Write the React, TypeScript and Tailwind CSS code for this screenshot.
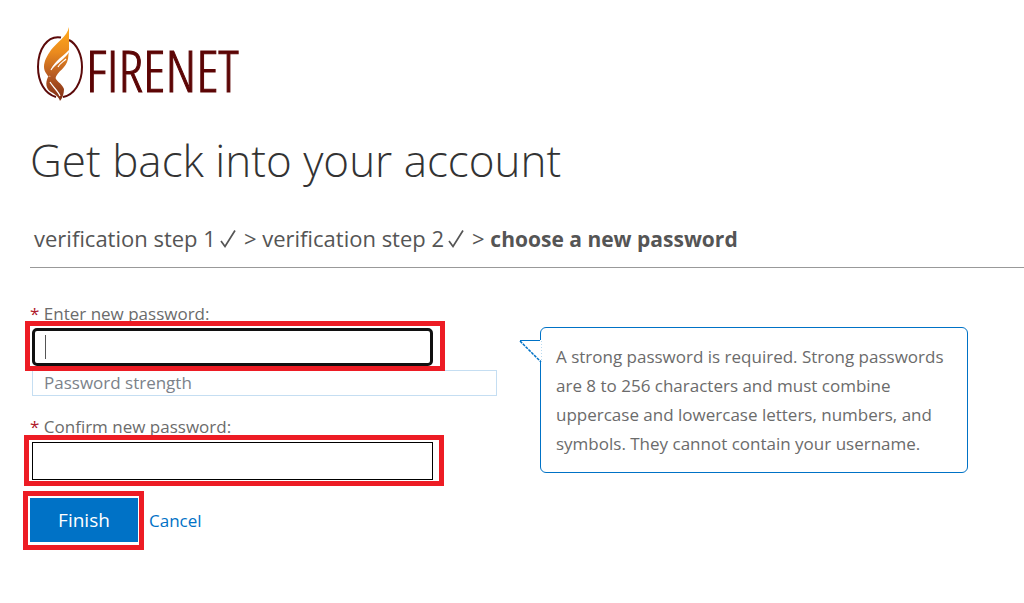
import type { ReactNode } from "react";

function Logo() {
  return (
    <div className="flex h-[76px] items-center" role="img" aria-label="FIRENET">
      <svg className="h-[76px] w-[50px] shrink-0" viewBox="0 0 50 76" fill="none" aria-hidden="true">
        <defs>
          <linearGradient id="flame" x1="0" y1="0" x2="0" y2="76" gradientUnits="userSpaceOnUse">
            <stop offset="0.1" stopColor="#fba31c" />
            <stop offset="0.35" stopColor="#ea8a1e" />
            <stop offset="0.65" stopColor="#b65a22" />
            <stop offset="1" stopColor="#7c2a14" />
          </linearGradient>
        </defs>
        <path
          d="M27 11.500C13 9 4 24 4 41C4 56 11 68 22 71M35 14C43 18 48 29 48 41C48 57 40 69 29 71"
          stroke="#5c0a0a"
          strokeWidth="2"
        />
        <path
          fill="url(#flame)"
          d="M35 1C33 11 23 16 17 24C13 30 10 35 10 41C10 46 14 49 15 52L17 46C17 38 27 32 35 24Z"
        />
        <path
          fill="url(#flame)"
          d="M35 25C33 32 20 37 15 46L17 53H21C24 44 32 43 34 33L35 24Z"
        />
        <path
          fill="url(#flame)"
          d="M14 51C11 57 12 63 17 66C21 68 25 71 26 75C28 73 30 68 30 63C28 57 21 55 21 50Z"
        />
        <path d="M17 44C21 37 30 34 35 25M24 41C26 37 29 36 32 33M16 56C19 61 24 65 26 70" stroke="#fff" strokeWidth="1.200" />
      </svg>
      <span className="pt-3 pl-0.5 font-['Open_Sans_Condensed_Light','Open_Sans_Condensed',sans-serif] text-[58px] leading-none font-light text-[#5c0505] [-webkit-text-stroke:1px_#5c0505]">
        FIRENET
      </span>
    </div>
  );
}

function Highlight({ className }: { className: string }) {
  return <span aria-hidden="true" className={`pointer-events-none absolute border-[5px] border-[#ed1c24] ${className}`} />;
}

function FieldLabel({ htmlFor, children }: { htmlFor: string; children: ReactNode }) {
  return (
    <label htmlFor={htmlFor} className="block text-[17px] leading-6 text-[#6b6b6b]">
      <span className="text-[#b0182b]">*</span> {children}
    </label>
  );
}

function Check() {
  return (
    <svg className="mr-2 ml-1 inline-block h-5 w-4 align-[-2px]" viewBox="0 0 16 20" fill="none" role="img" aria-label="complete">
      <path d="M1 12L5 17.500L15 1.500" stroke="#555" strokeWidth="1.700" />
    </svg>
  );
}

export default function App() {
  return (
    <main className="bg-white pt-[26px] pb-12 pl-[30px] font-['Open_Sans','Noto_Sans',sans-serif] text-[#6b6b6b]">
      <div className="pl-1">
        <Logo />
      </div>
      <h1 className="mt-6 text-[44px] leading-[68px] font-light text-[#333]">Get back into your account</h1>
      <nav aria-label="Progress" className="mt-7 border-b border-[#999] pb-3 pl-1 text-[22px] leading-8 text-[#555]">
        <span>verification step 1</span>
        <Check />
        <span>&gt; verification step 2</span>
        <Check />
        <span>&gt; </span>
        <strong className="text-[21px] font-bold">choose a new password</strong>
      </nav>

      <div className="flex items-start gap-[43px] pt-[34px] pr-14">
        <form className="w-[467px] shrink-0" onSubmit={(e) => e.preventDefault()}>
          <FieldLabel htmlFor="new-password">Enter new password:</FieldLabel>
          <div className="relative mt-0.5 ml-0.5 w-[401px]">
            <input
              id="new-password"
              type="password"
              autoComplete="new-password"
              className="block h-[38px] w-full rounded-[5px] border-[3px] border-[#101010] bg-white px-3 text-[17px] outline-none"
            />
            <span aria-hidden="true" className="absolute top-[7px] left-[13px] h-6 w-px bg-[#555]" />
            <Highlight className="-top-[7px] -right-3 -bottom-[5px] -left-[7px]" />
          </div>
          <div className="mt-1 ml-0.5 h-[26px] border border-[#c5def2] pl-[11px] text-[17px] leading-6 text-[#7b828a]">
            Password strength
          </div>
          <div className="mt-[19px]">
            <FieldLabel htmlFor="confirm-password">Confirm new password:</FieldLabel>
          </div>
          <div className="relative mt-[3px] ml-0.5 w-[401px]">
            <input
              id="confirm-password"
              type="password"
              autoComplete="new-password"
              className="block h-[38px] w-full border border-black bg-white px-3 text-[17px] outline-none"
            />
            <Highlight className="-top-[7px] -right-[11px] -bottom-[6px] -left-2" />
          </div>
          <div className="mt-[18px] flex items-center gap-[11px]">
            <div className="relative">
              <button type="submit" className="block h-[44px] w-[108px] bg-[#0072c6] text-[19px] text-white">
                Finish
              </button>
              <Highlight className="-top-[7px] -right-[6px] -bottom-2 -left-[7px]" />
            </div>
            <a href="#cancel" className="pt-0.5 text-[17px] leading-6 text-[#0072c6]">
              Cancel
            </a>
          </div>
        </form>

        <aside className="relative mt-[25px] max-w-[428px] flex-1 rounded-md border border-[#0072c6] px-[15px] py-[14px] text-[17px] leading-[29px]">
          <svg className="absolute top-[11px] -left-[22px] h-6 w-[23px]" viewBox="0 0 23 24" fill="none" aria-hidden="true">
            <path d="M1 1L22 22V1Z" fill="#fff" />
            <path d="M1 1.500H21" stroke="#0072c6" />
            <path d="M1 2L22 23" stroke="#0072c6" strokeWidth="1.500" strokeDasharray="3 1" />
            <path d="M22.500 2V22" stroke="#b9d9ef" strokeDasharray="1 2" />
          </svg>
          A strong password is required. Strong passwords are 8 to 256 characters and must combine uppercase and lowercase
          letters, numbers, and symbols. They cannot contain your username.
        </aside>
      </div>
    </main>
  );
}
